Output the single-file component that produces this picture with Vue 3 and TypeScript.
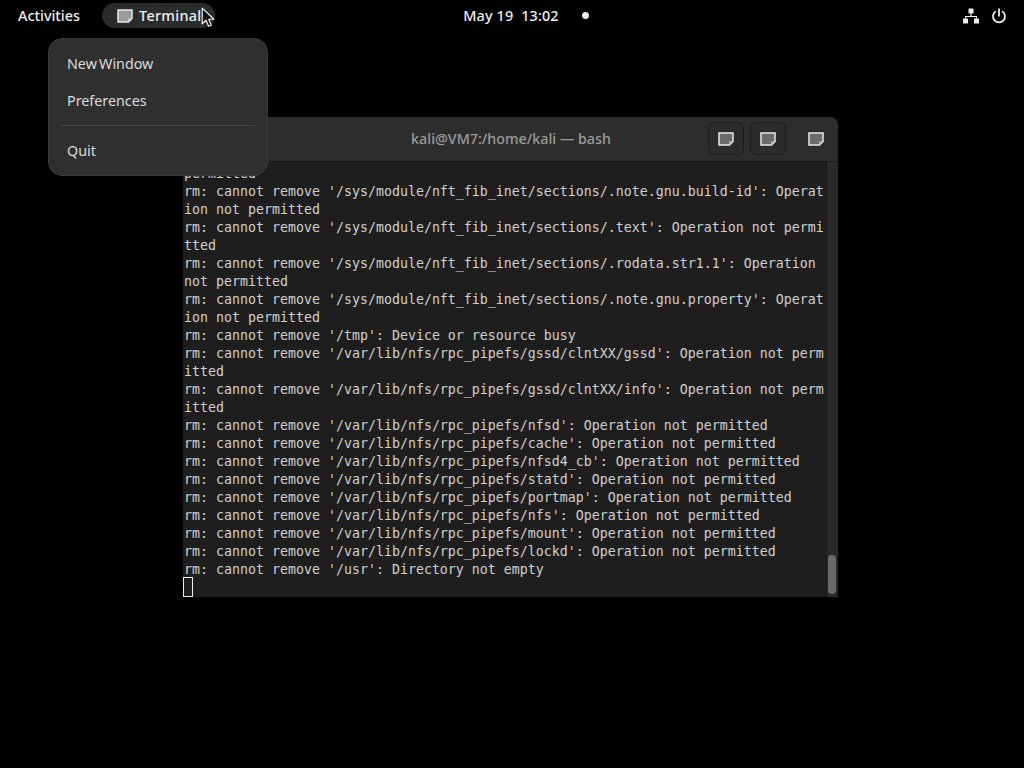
<script setup lang="ts">
const lines: string[] = [
  "permitted",
  "rm: cannot remove '/sys/module/nft_fib_inet/sections/.note.gnu.build-id': Operat",
  "ion not permitted",
  "rm: cannot remove '/sys/module/nft_fib_inet/sections/.text': Operation not permi",
  "tted",
  "rm: cannot remove '/sys/module/nft_fib_inet/sections/.rodata.str1.1': Operation",
  "not permitted",
  "rm: cannot remove '/sys/module/nft_fib_inet/sections/.note.gnu.property': Operat",
  "ion not permitted",
  "rm: cannot remove '/tmp': Device or resource busy",
  "rm: cannot remove '/var/lib/nfs/rpc_pipefs/gssd/clntXX/gssd': Operation not perm",
  "itted",
  "rm: cannot remove '/var/lib/nfs/rpc_pipefs/gssd/clntXX/info': Operation not perm",
  "itted",
  "rm: cannot remove '/var/lib/nfs/rpc_pipefs/nfsd': Operation not permitted",
  "rm: cannot remove '/var/lib/nfs/rpc_pipefs/cache': Operation not permitted",
  "rm: cannot remove '/var/lib/nfs/rpc_pipefs/nfsd4_cb': Operation not permitted",
  "rm: cannot remove '/var/lib/nfs/rpc_pipefs/statd': Operation not permitted",
  "rm: cannot remove '/var/lib/nfs/rpc_pipefs/portmap': Operation not permitted",
  "rm: cannot remove '/var/lib/nfs/rpc_pipefs/nfs': Operation not permitted",
  "rm: cannot remove '/var/lib/nfs/rpc_pipefs/mount': Operation not permitted",
  "rm: cannot remove '/var/lib/nfs/rpc_pipefs/lockd': Operation not permitted",
  "rm: cannot remove '/usr': Directory not empty",
];
const headerButtons = [
  { id: "a", framed: true },
  { id: "b", framed: true },
  { id: "c", framed: false },
];
</script>

<template>
  <div class="desktop">
    <header class="topbar">
      <div class="left">
        <span class="activities">Activities</span>
        <span class="app-pill">
          <svg class="doc" width="16" height="14" viewBox="0 0 16 14">
            <path d="M1 1h14v8.5L11.5 13H1z" fill="#9a9a9a" stroke="#e8e8e8" stroke-width="1.5" />
            <path d="M11 12.5V9.2h3.5z" fill="#c8c8c8" />
          </svg>
          <span class="app-name">Terminal</span>
        </span>
      </div>
      <div class="clock">
        <span class="date">May 19&nbsp;&nbsp;13:02</span>
        <span class="dot"></span>
      </div>
      <div class="right">
        <svg width="18" height="18" viewBox="0 0 18 18" fill="#eee">
          <rect x="6.5" y="1.5" width="5" height="5" rx=".6" />
          <rect x="1" y="11.5" width="5" height="5" rx=".6" />
          <rect x="12" y="11.5" width="5" height="5" rx=".6" />
          <path d="M8.4 6.5h1.2v2.4H15v2.6h-1.2v-1.4H4.2v1.4H3V8.9h5.4z" />
        </svg>
        <svg width="18" height="18" viewBox="0 0 18 18" fill="none" stroke="#eee" stroke-width="1.8" stroke-linecap="round">
          <path d="M9 2.2v6.6" />
          <path d="M5.3 4.6a6 6 0 1 0 7.4 0" />
        </svg>
      </div>
    </header>

    <section class="window">
      <div class="titlebar">
        <span class="title">kali@VM7:/home/kali — bash</span>
        <div class="buttons">
          <span v-for="b in headerButtons" :key="b.id" class="hbtn" :class="{ framed: b.framed }">
            <svg width="16" height="14" viewBox="0 0 16 14">
              <path d="M1 1h14v8.5L11.5 13H1z" fill="#6a6a6a" stroke="#e8e8e8" stroke-width="1.5" />
              <path d="M11 12.5V9.2h3.5z" fill="#a8a8a8" />
            </svg>
          </span>
        </div>
      </div>
      <div class="body">
        <div class="screen">
          <div v-for="(l, i) in lines" :key="i" class="line">{{ l }}</div>
          <div class="line"><span class="cursor"></span></div>
        </div>
        <div class="scroll"><div class="thumb"></div></div>
      </div>
    </section>

    <nav class="menu">
      <div class="item new">New Window</div>
      <div class="item">Preferences</div>
      <div class="sep"></div>
      <div class="item">Quit</div>
    </nav>

    <svg class="pointer" width="15" height="21" viewBox="0 0 14 20">
      <path d="M1 1v15l3.6-3.4 2.5 5.8 2.6-1.1-2.5-5.6h5z" fill="#111" stroke="#f4f4f4" stroke-width="1.1" stroke-linejoin="round" />
    </svg>
  </div>
</template>

<style>
html, body { margin: 0; background: #000; }
</style>

<style scoped>
.desktop {
  position: relative;
  width: 1024px;
  height: 768px;
  background: #000;
  overflow: hidden;
  font-family: "Noto Sans", sans-serif;
}
.topbar {
  display: grid;
  grid-template-columns: 1fr auto 1fr;
  align-items: center;
  height: 31px;
  color: #eee;
  font-size: 14.4px;
  font-weight: 500;
}
.left { display: flex; align-items: center; gap: 22px; padding-left: 18px; }
.app-pill {
  display: flex;
  align-items: center;
  gap: 6px;
  width: 113px;
  box-sizing: border-box;
  height: 25px;
  padding-left: 15px;
  border-radius: 13px;
  background: #2b2b2b;
}
.app-name { letter-spacing: .3px; }
.clock { display: flex; align-items: center; gap: 23px; padding-left: 28px; }
.date { letter-spacing: .15px; }
.dot { width: 7px; height: 7px; border-radius: 50%; background: #eee; }
.right { display: flex; justify-content: flex-end; align-items: center; gap: 10px; padding-right: 16px; }

.window {
  position: absolute;
  left: 183px;
  top: 117px;
  width: 655px;
  height: 480px;
  border-radius: 8px 8px 0 0;
  display: flex;
  flex-direction: column;
  overflow: hidden;
  background: #1e1e1e;
}
.titlebar {
  flex: none;
  height: 45px;
  background: #2d2d2d;
  border-bottom: 1px solid #1b1b1b;
  box-sizing: border-box;
  display: flex;
  align-items: center;
  justify-content: flex-end;
}
.title {
  flex: 1;
  margin-right: -135px;
  padding-bottom: 2px;
  text-align: center;
  color: #9b9b9b;
  font-size: 14.3px;
  font-weight: 500;
}
.buttons { display: flex; gap: 6px; width: 130px; justify-content: flex-end; padding-right: 4px; }
.hbtn {
  flex: none;
  width: 34px;
  height: 31px;
  display: flex;
  align-items: center;
  justify-content: center;
  border-radius: 6px;
  border: 1px solid transparent;
  margin-top: -1px;
}
.hbtn:last-child { margin-left: 6px; }
.framed { background: #2b2b2b; border-color: #1d1d1d; }
.body { flex: 1; display: flex; min-height: 0; }
.screen {
  flex: 1;
  padding: 3px 0 0 1px;
  font-family: "DejaVu Sans Mono", monospace;
  font-size: 13.29px;
  color: #d0d0d0;
  overflow: hidden;
}
.line { height: 18px; line-height: 18px; white-space: pre; }
.cursor {
  display: block;
  width: 8px;
  height: 18px;
  margin: -2px 0 0 -1px;
  border: 1px solid #eee;
}
.scroll {
  flex: none;
  width: 12px;
  background: #2a2a2a;
  border-left: 1px solid #1a1a1a;
  box-sizing: border-box;
  display: flex;
  flex-direction: column;
  justify-content: flex-end;
  padding: 0 2px 3px 1px;
}
.thumb { height: 39px; border-radius: 4px; background: #6b6b6b; }

.menu {
  position: absolute;
  left: 48px;
  top: 38px;
  width: 220px;
  box-sizing: border-box;
  padding: 6px 0;
  background: #2f2f2f;
  border: 1px solid #3a3a3a;
  border-radius: 14px;
  color: #dcdcdc;
  font-size: 14.3px;
}
.item { height: 37px; line-height: 37px; padding-left: 18px; }
.new { word-spacing: -1.5px; }
.sep { height: 1px; margin: 6px 12px; background: #434343; }
.pointer { position: absolute; left: 201px; top: 7px; }
</style>
